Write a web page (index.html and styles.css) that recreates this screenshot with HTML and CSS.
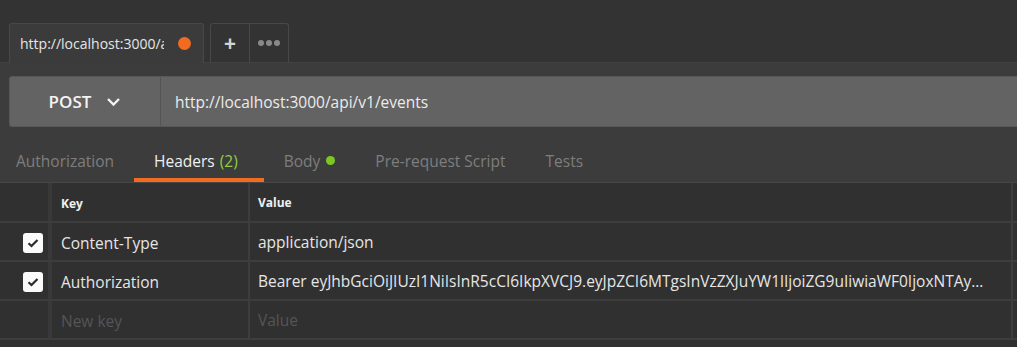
FILE: index.html
```html
<!DOCTYPE html>
<html lang="en">

<head>
    <meta charset="UTF-8">
    <meta name="viewport" content="width=device-width, initial-scale=1.0">
    <title>Postman - POST events</title>
    <link rel="stylesheet" href="styles.css">
</head>

<body>
    <div class="tabbar">
        <div class="tab">
            <span class="tab-title">http://localhost:3000/api/v1/events</span>
            <span class="dot"></span>
        </div>
        <div class="tab-actions">
            <div class="action plus">+</div>
            <div class="action more">
                <span></span><span></span><span></span>
            </div>
        </div>
    </div>

    <div class="main">
        <div class="urlbar">
            <div class="method">
                POST
                <svg width="15" height="10" viewBox="0 0 15 10">
                    <path d="M2 2 L7.5 7.5 L13 2" fill="none" stroke="#f2f2f2" stroke-width="2.4" />
                </svg>
            </div>
            <div class="url">http://localhost:3000/api/v1/events</div>
        </div>

        <div class="req-tabs">
            <div class="req-tab">Authorization</div>
            <div class="req-tab active">Headers <span class="count">(2)</span></div>
            <div class="req-tab">Body <span class="green-dot"></span></div>
            <div class="req-tab">Pre-request Script</div>
            <div class="req-tab">Tests</div>
        </div>
    </div>

    <div class="table">
        <div class="row head">
            <div class="cell check"></div>
            <div class="cell key">Key</div>
            <div class="cell value">Value</div>
        </div>
        <div class="row">
            <div class="cell check">
                <span class="box">
                    <svg width="12" height="10" viewBox="0 0 12 10">
                        <path d="M1.5 5.2 L4.5 8 L10.5 2" fill="none" stroke="#2a2a2a" stroke-width="2.2" />
                    </svg>
                </span>
            </div>
            <div class="cell key">Content-Type</div>
            <div class="cell value">application/json</div>
        </div>
        <div class="row">
            <div class="cell check">
                <span class="box">
                    <svg width="12" height="10" viewBox="0 0 12 10">
                        <path d="M1.5 5.2 L4.5 8 L10.5 2" fill="none" stroke="#2a2a2a" stroke-width="2.2" />
                    </svg>
                </span>
            </div>
            <div class="cell key">Authorization</div>
            <div class="cell value">Bearer eyJhbGciOiJIUzI1NiIsInR5cCI6IkpXVCJ9.eyJpZCI6MTgsInVzZXJuYW1lIjoiZG9uIiwiaWF0IjoxNTAyMzQ1Njc4fQ.abc</div>
        </div>
        <div class="row">
            <div class="cell check"></div>
            <div class="cell key placeholder">New key</div>
            <div class="cell value placeholder">Value</div>
        </div>
    </div>
</body>

</html>
```

FILE: styles.css
```css
* {
    margin: 0;
    padding: 0;
    box-sizing: border-box;
}

body {
    font-family: 'Open Sans', sans-serif;
    background-color: #303030;
    color: #e8e8e8;
    font-size: 15.5px;
    overflow: hidden;
}

/* Barra de abas */
.tabbar {
    background-color: #333;
    height: 63px;
    padding: 23px 0 0 9px;
    display: flex;
    border-bottom: 1px solid #414141;
}

.tab {
    width: 195px;
    height: 40px;
    background-color: #3b3b3b;
    border: 1px solid #484848;
    border-bottom: none;
    border-radius: 3px 3px 0 0;
    display: flex;
    align-items: center;
    padding: 0 12px 0 10px;
    margin-bottom: -1px;
}

.tab-title {
    width: 145px;
    overflow: hidden;
    white-space: nowrap;
    font-size: 14px;
    color: #e6e6e6;
}

.dot {
    width: 13px;
    height: 13px;
    border-radius: 50%;
    background-color: #f26b21;
    margin-left: 14px;
}

.tab-actions {
    margin-left: 6px;
    height: 39px;
    display: flex;
    border: 1px solid #484848;
    border-bottom: none;
    border-radius: 3px 3px 0 0;
}

.action {
    display: flex;
    align-items: center;
    justify-content: center;
    color: #d4d4d4;
}

.plus {
    width: 39px;
    font-size: 21px;
    font-weight: 700;
    border-right: 1px solid #484848;
}

.more {
    width: 38px;
    gap: 2px;
}

.more span {
    width: 6px;
    height: 6px;
    border-radius: 50%;
    background-color: #8a8a8a;
}

/* Area principal */
.main {
    background-color: #3c3c3c;
    padding-top: 13px;
}

.urlbar {
    margin-left: 9px;
    height: 51px;
    background-color: #636363;
    border: 1px solid #585858;
    border-right: none;
    border-radius: 3px 0 0 3px;
    display: flex;
    align-items: stretch;
}

.method {
    width: 151px;
    border-right: 1px solid #555;
    display: flex;
    align-items: center;
    justify-content: center;
    gap: 15px;
    font-size: 17px;
    font-weight: 600;
    color: #f4f4f4;
}

.url {
    display: flex;
    align-items: center;
    padding-left: 14px;
    font-size: 15.5px;
    color: #ececec;
}

.req-tabs {
    display: flex;
    height: 56px;
    padding-top: 12px;
    border-bottom: 1px solid #474747;
}

.req-tab {
    padding: 4px 20px 0;
    color: #7e7e7e;
    height: 43px;
    display: flex;
    align-items: center;
    border-bottom: 4px solid transparent;
    white-space: nowrap;
}

.req-tab:first-child {
    padding-left: 16px;
}

.req-tab.active {
    color: #f0f0f0;
    border-bottom-color: #f26b21;
    padding-right: 26px;
}

.count {
    color: #8fcf3f;
    margin-left: 5px;
}

.green-dot {
    display: inline-block;
    width: 9px;
    height: 9px;
    border-radius: 50%;
    background-color: #7cc820;
    margin-left: 6px;
}

/* Tabela de headers */
.table {
    background-color: #303030;
}

.row {
    display: flex;
    height: 39px;
    border-bottom: 2px solid #3d3d3d;
}

.row.head {
    height: 40px;
}

.cell {
    display: flex;
    align-items: center;
    white-space: nowrap;
    overflow: hidden;
}

.check {
    width: 52px;
    justify-content: flex-end;
    border-right: 4px solid #393939;
}

.box {
    width: 20px;
    height: 20px;
    border-radius: 3px;
    background-color: #fafafa;
    display: flex;
    align-items: center;
    justify-content: center;
    margin-right: 5px;
    margin-top: 2px;
}

.key {
    width: 198px;
    padding-left: 9px;
    padding-top: 2px;
    border-right: 2px solid #3d3d3d;
    color: #e6e6e6;
}

.value {
    width: 763px;
    padding: 2px 22px 0 8px;
    border-right: 2px solid #3d3d3d;
    color: #e6e6e6;
    text-overflow: ellipsis;
    display: block;
    line-height: 35px;
}

.head .cell {
    font-size: 12px;
    font-weight: 700;
    color: #f0f0f0;
}

.head .value {
    line-height: 36px;
}

.placeholder {
    color: #555;
}
```
